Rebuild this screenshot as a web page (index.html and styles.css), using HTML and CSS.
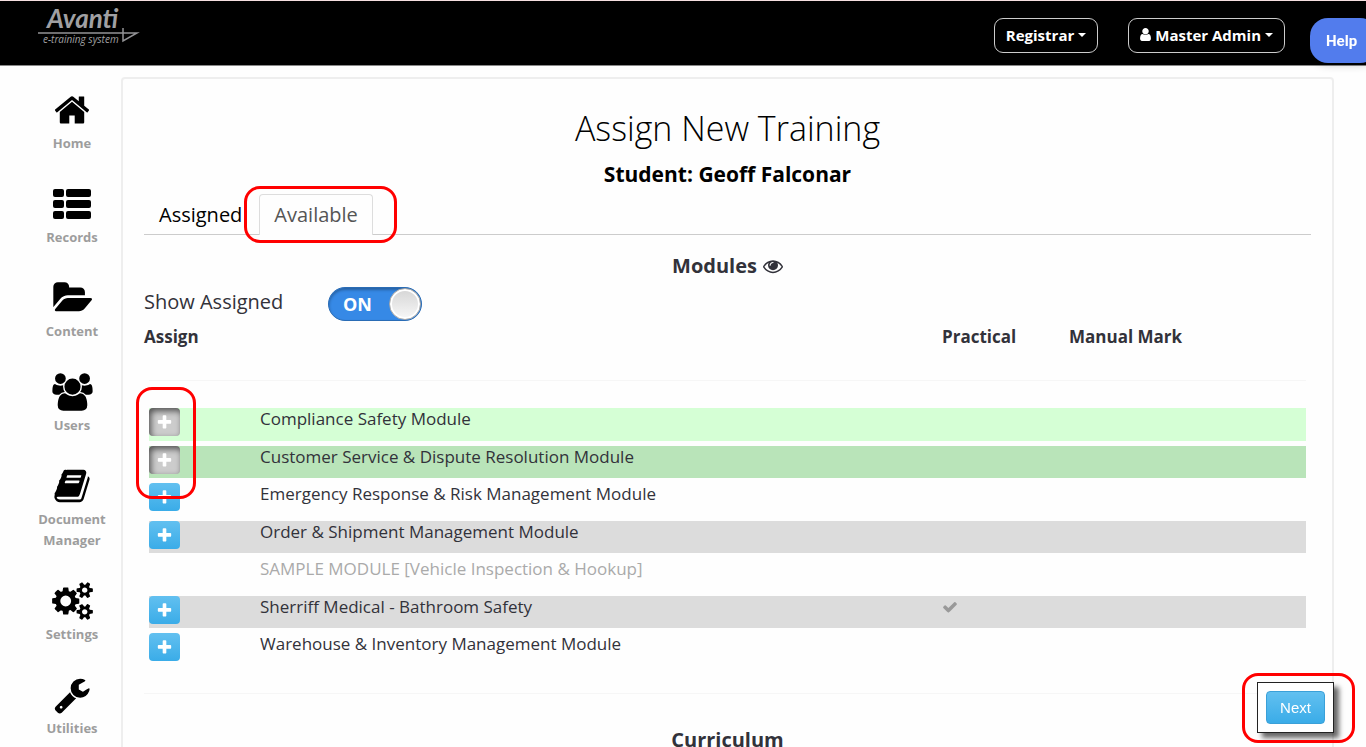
FILE: index.html
```html
<!DOCTYPE html>
<html lang="en">
  <head>
    <meta charset="UTF-8" />
    <meta name="viewport" content="width=device-width, initial-scale=1.0" />
    <title>Assign New Training</title>
    <link rel="stylesheet" href="styles.css">
  </head>
  <body>
    <!-- Shared icons -->
    <svg class="sprite" aria-hidden="true">
      <symbol id="plus" viewBox="0 0 1792 1792">
        <path d="M1600 736v192q0 40-28 68t-68 28h-416v416q0 40-28 68t-68 28h-192q-40 0-68-28t-28-68v-416h-416q-40 0-68-28t-28-68v-192q0-40 28-68t68-28h416v-416q0-40 28-68t68-28h192q40 0 68 28t28 68v416h416q40 0 68 28t28 68z" />
      </symbol>
    </svg>

    <header class="topbar">
      <a class="logo" href="#" aria-label="Avanti e-training system">
        <svg width="102" height="46" viewBox="0 -6 102 46">
          <text class="logo-name" x="9" y="21">Avanti</text>
          <path d="M0 26H99L85 34V21" />
          <text class="logo-sub" x="5" y="36">e-training system</text>
        </svg>
      </a>
      <nav class="account">
        <button class="outline-btn" type="button">Registrar <span class="caret"></span></button>
        <button class="outline-btn" type="button">
          <svg class="user-icon" viewBox="256 128 1280 1536"><path d="M1536 1399q0 109-62.5 187t-150.5 78h-854q-88 0-150.5-78t-62.5-187q0-85 8.5-160.5t31.5-152 58.5-131 94-89 134.5-34.5q131 128 313 128t313-128q76 0 134.5 34.5t94 89 58.5 131 31.5 152 8.5 160.5zm-256-887q0 159-112.5 271.5t-271.5 112.5-271.5-112.5-112.5-271.5 112.5-271.5 271.5-112.5 271.5 112.5 112.5 271.5z" /></svg>
          Master Admin <span class="caret"></span>
        </button>
      </nav>
      <button class="help" type="button">Help</button>
    </header>

    <div class="layout">
      <!-- Sidebar -->
      <nav class="sidebar">
        <a href="#">
          <svg width="38" height="38" viewBox="0 0 1792 1792"><path d="M1472 992v480q0 26-19 45t-45 19h-384v-384h-256v384h-384q-26 0-45-19t-19-45v-480q0-1 .5-3t.5-3l575-474 575 474q1 2 1 6zm223-69l-62 74q-8 9-21 11h-3q-13 0-21-7l-692-577-692 577q-12 8-24 7-13-2-21-11l-62-74q-8-10-7-23.5t11-21.5l719-599q32-26 76-26t76 26l244 204v-195q0-14 9-23t23-9h192q14 0 23 9t9 23v408l219 182q10 8 11 21.5t-7 23.5z" /></svg>
          <span>Home</span>
        </a>
        <a href="#">
          <svg width="38" height="38" viewBox="0 -4 38 38">
            <rect x="0" y="0" width="11" height="8" rx="2" /><rect x="13" y="0" width="25" height="8" rx="2" />
            <rect x="0" y="11" width="11" height="8" rx="2" /><rect x="13" y="11" width="25" height="8" rx="2" />
            <rect x="0" y="22" width="11" height="8" rx="2" /><rect x="13" y="22" width="25" height="8" rx="2" />
          </svg>
          <span>Records</span>
        </a>
        <a href="#">
          <svg width="40" height="38" viewBox="0 0 1944 1792"><path d="M1943 952q0 31-31 66l-336 396q-43 51-120.5 86.5t-143.5 35.5h-1088q-34 0-60.5-13t-26.5-43q0-31 31-66l336-396q43-51 120.5-86.5t143.5-35.5h1088q34 0 60.5 13t26.5 43zm-343-344v160h-832q-94 0-197 47.5t-164 119.5l-337 396-5 6q0-4-.5-12.5t-.5-12.5v-960q0-92 66-158t158-66h320q92 0 158 66t66 158v32h544q92 0 158 66t66 158z" /></svg>
          <span>Content</span>
        </a>
        <a href="#">
          <svg width="43" height="38" viewBox="0 0 2048 1792"><path d="M657 896q-162 5-265 128h-134q-82 0-138-40.5t-56-118.5q0-353 124-353 6 0 43.5 21t97.5 42.5 119 21.5q67 0 133-23-5 37-5 66 0 139 81 256zm1071 637q0 120-73 189.5t-194 69.5h-874q-121 0-194-69.5t-73-189.5q0-53 3.5-103.5t14-109 26.5-108.5 43-97.5 62-81 85.5-53.5 111.5-20q10 0 43 21.5t73 48 107 48 135 21.5 135-21.5 107-48 73-48 43-21.5q61 0 111.5 20t85.5 53.5 62 81 43 97.5 26.5 108.5 14 109 3.5 103.5zm-1024-1277q0 106-75 181t-181 75-181-75-75-181 75-181 181-75 181 75 75 181zm704 384q0 159-112.5 271.5t-271.5 112.5-271.5-112.5-112.5-271.5 112.5-271.5 271.5-112.5 271.5 112.5 112.5 271.5zm576 225q0 78-56 118.5t-138 40.5h-134q-103-123-265-128 81-117 81-256 0-29-5-66 66 23 133 23 59 0 119-21.5t97.5-42.5 43.5-21q124 0 124 353zm-128-609q0 106-75 181t-181 75-181-75-75-181 75-181 181-75 181 75 75 181z" /></svg>
          <span>Users</span>
        </a>
        <a href="#">
          <svg width="38" height="38" viewBox="0 0 1792 1792"><path d="M1703 478q40 57 18 129l-275 906q-19 64-76.5 107.5t-122.5 43.5h-923q-77 0-148.5-53.5t-99.5-131.5q-24-67-2-127 0-4 3-27t4-37q1-8-3-21.5t-3-19.5q2-11 8-21t16.5-23.5 16.5-23.5q23-38 45-91.5t30-91.5q3-10 .5-30t-.5-28q3-11 17-28t17-23q21-36 42-92t25-90q1-9-2.5-32t.5-28q4-13 22-30.5t22-22.5q19-26 42.5-84.5t27.5-96.5q1-8-3-25.5t-2-26.5q2-8 9-18t18-23 17-21q8-12 16.5-30.5t15-35 16-36 19.5-32 26.5-23.5 36-11.5 47.5 5.5l-1 3q38-9 51-9h761q74 0 114 56t18 130l-274 906q-36 119-71.5 153.5t-128.5 34.5h-869q-27 0-38 15-11 16-1 43 24 70 144 70h923q29 0 56-15.5t35-41.5l300-987q7-22 5-57 38 15 59 43zm-1064 2q-4 13 2 22.5t20 9.5h608q13 0 25.5-9.5t16.5-22.5l21-64q4-13-2-22.5t-20-9.5h-608q-13 0-25.5 9.5t-16.5 22.5zm-83 256q-4 13 2 22.5t20 9.5h608q13 0 25.5-9.5t16.5-22.5l21-64q4-13-2-22.5t-20-9.5h-608q-13 0-25.5 9.5t-16.5 22.5z" /></svg>
          <span>Document Manager</span>
        </a>
        <a href="#">
          <svg width="41" height="38" viewBox="0 0 1920 1792"><path d="M896 896q0-106-75-181t-181-75-181 75-75 181 75 181 181 75 181-75 75-181zm768 512q0-52-38-90t-90-38-90 38-38 90q0 53 37.5 90.5t90.5 37.5 90.5-37.5 37.5-90.5zm0-1024q0-52-38-90t-90-38-90 38-38 90q0 53 37.5 90.5t90.5 37.5 90.5-37.5 37.5-90.5zm-384 421v185q0 10-7 19.5t-16 10.5l-155 24q-11 35-32 76 34 48 90 115 7 11 7 20 0 12-7 19-23 30-82.5 89.5t-78.5 59.5q-11 0-21-7l-115-90q-37 19-77 31-11 108-23 155-7 24-30 24h-186q-11 0-20-7.5t-10-17.5l-23-153q-34-10-75-31l-118 89q-7 7-20 7-11 0-21-8-144-133-144-160 0-9 7-19 10-14 41-53t47-61q-23-44-35-82l-152-24q-10-1-17-9.5t-7-19.5v-185q0-10 7-19.5t16-10.5l155-24q11-35 32-76-34-48-90-115-7-11-7-20 0-12 7-20 22-30 82-89t79-59q11 0 21 7l115 90q34-18 77-32 11-108 23-154 7-24 30-24h186q11 0 20 7.5t10 17.5l23 153q34 10 75 31l118-89q8-7 20-7 11 0 21 8 144 133 144 160 0 8-7 19-12 16-42 54t-45 60q23 48 34 82l152 23q10 2 17 10.5t7 19.5zm640 533v140q0 16-149 31-12 27-30 52 51 113 51 138 0 4-4 7-122 71-124 71-8 0-46-47t-52-68q-20 2-30 2t-30-2q-14 21-52 68t-46 47q-2 0-124-71-4-3-4-7 0-25 51-138-18-25-30-52-149-15-149-31v-140q0-16 149-31 13-29 30-52-51-113-51-138 0-4 4-7 4-2 35-20t59-34 30-16q8 0 46 46.5t52 67.5q20-2 30-2t30 2q51-71 92-112l6-2q4 0 124 70 4 3 4 7 0 25-51 138 17 23 30 52 149 15 149 31zm0-1024v140q0 16-149 31-12 27-30 52 51 113 51 138 0 4-4 7-122 71-124 71-8 0-46-47t-52-68q-20 2-30 2t-30-2q-14 21-52 68t-46 47q-2 0-124-71-4-3-4-7 0-25 51-138-18-25-30-52-149-15-149-31v-140q0-16 149-31 13-29 30-52-51-113-51-138 0-4 4-7 4-2 35-20t59-34 30-16q8 0 46 46.5t52 67.5q20-2 30-2t30 2q51-71 92-112l6-2q4 0 124 70 4 3 4 7 0 25-51 138 17 23 30 52 149 15 149 31z" /></svg>
          <span>Settings</span>
        </a>
        <a href="#">
          <svg width="38" height="38" viewBox="0 0 1792 1792"><path d="M448 1472q0-26-19-45t-45-19-45 19-19 45 19 45 45 19 45-19 19-45zm644-420l-682 682q-37 37-90 37-52 0-91-37l-106-108q-38-36-38-90 0-53 38-91l681-681q39 98 114.5 173.5t173.5 114.5zm634-435q0 39-23 106-47 134-164.5 217.5t-258.5 83.5q-185 0-316.5-131.5t-131.5-316.5 131.5-316.5 316.5-131.5q58 0 121.5 16.5t107.5 46.5q16 11 16 28t-16 28l-293 169v224l193 107q5-3 79-48.5t135.5-81 70.5-35.5q15 0 23.5 10t8.5 25z" /></svg>
          <span>Utilities</span>
        </a>
      </nav>

      <!-- Assign panel -->
      <main class="panel">
        <h1>Assign New Training</h1>
        <p class="student">Student: Geoff Falconar</p>

        <div class="tabs">
          <a class="tab" href="#">Assigned</a>
          <a class="tab active" href="#">Available<span class="mark mark-tab"></span></a>
        </div>

        <h2>
          Modules
          <svg width="20" height="20" viewBox="0 0 1792 1792"><path d="M1664 960q-152-236-381-353 61 104 61 225 0 185-131.5 316.5t-316.5 131.5-316.5-131.5-131.5-316.5q0-121 61-225-229 117-381 353 133 205 333.5 326.5t434.5 121.5 434.5-121.5 333.5-326.5zm-720-384q0-20-14-34t-34-14q-125 0-214.5 89.5t-89.5 214.5q0 20 14 34t34 14 34-14 14-34q0-86 61-147t147-61q20 0 34-14t14-34zm848 384q0 34-20 69-140 230-376.5 368.5t-499.5 138.5-499.5-139-376.5-368q-20-35-20-69t20-69q140-229 376.5-368t499.5-139 499.5 139 376.5 368q20 35 20 69z" /></svg>
        </h2>

        <label class="show-assigned">
          <span class="show-label">Show Assigned</span>
          <span class="switch">
            <input type="checkbox" checked />
            <span class="switch-text">ON</span>
            <span class="knob"></span>
          </span>
        </label>

        <div class="table-wrap">
          <table class="modules">
            <thead>
              <tr>
                <th class="col-assign">Assign</th>
                <th></th>
                <th class="col-practical">Practical</th>
                <th class="col-manual">Manual Mark</th>
              </tr>
            </thead>
            <tbody>
              <tr class="assigned">
                <td><button class="add pressed" type="button" aria-label="Assign"><svg><use href="#plus" /></svg></button></td>
                <td>Compliance Safety Module</td>
                <td></td>
                <td></td>
              </tr>
              <tr class="assigned">
                <td><button class="add pressed" type="button" aria-label="Assign"><svg><use href="#plus" /></svg></button></td>
                <td>Customer Service &amp; Dispute Resolution Module</td>
                <td></td>
                <td></td>
              </tr>
              <tr>
                <td><button class="add" type="button" aria-label="Assign"><svg><use href="#plus" /></svg></button></td>
                <td>Emergency Response &amp; Risk Management Module</td>
                <td></td>
                <td></td>
              </tr>
              <tr>
                <td><button class="add" type="button" aria-label="Assign"><svg><use href="#plus" /></svg></button></td>
                <td>Order &amp; Shipment Management Module</td>
                <td></td>
                <td></td>
              </tr>
              <tr class="sample">
                <td></td>
                <td>SAMPLE MODULE [Vehicle Inspection &amp; Hookup]</td>
                <td></td>
                <td></td>
              </tr>
              <tr>
                <td><button class="add" type="button" aria-label="Assign"><svg><use href="#plus" /></svg></button></td>
                <td>Sherriff Medical - Bathroom Safety</td>
                <td><svg class="check" viewBox="0 0 1792 1792"><path d="M1671 566q0 40-28 68l-724 724-136 136q-28 28-68 28t-68-28l-136-136-362-362q-28-28-28-68t28-68l136-136q28-28 68-28t68 28l294 295 656-657q28-28 68-28t68 28l136 136q28 28 28 68z" /></svg></td>
                <td></td>
              </tr>
              <tr>
                <td><button class="add" type="button" aria-label="Assign"><svg><use href="#plus" /></svg></button></td>
                <td>Warehouse &amp; Inventory Management Module</td>
                <td></td>
                <td></td>
              </tr>
            </tbody>
          </table>
          <span class="mark mark-add"></span>
        </div>

        <h2 class="curriculum">Curriculum</h2>
      </main>
    </div>

    <div class="next-box">
      <button class="next" type="button">Next</button>
      <span class="mark mark-next"></span>
    </div>
  </body>
</html>
```

FILE: styles.css
```css
* {
  margin: 0;
  padding: 0;
  box-sizing: border-box;
}

body {
  height: 100vh;
  overflow: hidden;
  background: #fefefe;
  color: #32323a;
  font-family: 'Open Sans', sans-serif;
  font-size: 17px;
}

a {
  color: inherit;
  text-decoration: none;
}

button {
  border: none;
  cursor: pointer;
}

.sprite {
  display: none;
}

/* Top bar */
.topbar {
  display: flex;
  justify-content: space-between;
  align-items: flex-start;
  height: 66px;
  padding: 0 81px 0 38px;
  background: #000;
  border-top: 1px solid #f5dfe0;
  border-bottom: 1px solid #888;
}

.logo svg {
  display: block;
}

.logo path {
  fill: none;
  stroke: #929295;
  stroke-width: 1.5;
}

.logo text {
  fill: #a0a0a3;
  font-style: italic;
}

.logo-name {
  font-family: Lato, sans-serif;
  font-size: 26px;
  font-weight: 700;
}

.logo-sub {
  font-family: 'Open Sans', sans-serif;
  font-size: 10px;
}

.account {
  display: flex;
  gap: 30px;
  padding-top: 17px;
}

.outline-btn {
  display: flex;
  align-items: center;
  gap: 4px;
  height: 35px;
  padding: 0 11px 2px;
  background: #000;
  border: 1px solid #ccc;
  border-radius: 9px;
  color: #fff;
  font-family: inherit;
  font-size: 15px;
  font-weight: 700;
}

.user-icon {
  width: 11px;
  height: 13px;
  fill: #fff;
}

.caret {
  border-top: 4px solid #fff;
  border-left: 4px solid transparent;
  border-right: 4px solid transparent;
}

.help {
  position: fixed;
  top: 18px;
  right: -12px;
  width: 68px;
  height: 45px;
  padding-left: 16px;
  background: #527ced;
  border-radius: 18px;
  box-shadow: 0 2px 8px rgba(0, 0, 0, 0.2);
  color: #fff;
  font-family: Roboto, sans-serif;
  font-size: 15px;
  font-weight: 700;
  text-align: left;
}

/* Sidebar */
.layout {
  display: flex;
}

.sidebar {
  flex: none;
  display: flex;
  flex-direction: column;
  gap: 31px;
  width: 121px;
  padding: 25px 0 0 22px;
}

.sidebar a {
  display: flex;
  flex-direction: column;
  align-items: center;
  width: 100px;
  color: #9d9d9d;
  font-size: 13px;
  font-weight: 700;
  line-height: 21px;
  text-align: center;
}

.sidebar svg {
  margin-bottom: 4px;
  fill: #000;
}

.sidebar a > span {
  max-width: 80px;
}

/* Panel */
.panel {
  flex: 1;
  min-width: 0;
  margin: 11px 32px 0 0;
  padding: 24px 21px;
  border: 2px solid #eee;
  border-radius: 4px;
}

h1 {
  color: #000;
  font-size: 34px;
  font-weight: 300;
  line-height: 50px;
  text-align: center;
}

.student {
  margin-top: 6px;
  color: #000;
  font-size: 21px;
  font-weight: 700;
  line-height: 30px;
  text-align: center;
}

.tabs {
  display: flex;
  gap: 2px;
  height: 41px;
  margin-top: 5px;
  border-bottom: 1px solid #ccc;
}

.tab {
  position: relative;
  height: 41px;
  padding: 0 14px;
  border: 1px solid transparent;
  color: #000;
  font-size: 20px;
  line-height: 40px;
}

.tab.active {
  background: #fefefe;
  border-color: #ddd;
  border-bottom: none;
  border-radius: 4px 4px 0 0;
  color: #555;
}

h2 {
  display: flex;
  justify-content: center;
  align-items: center;
  gap: 6px;
  margin-top: 17px;
  font-size: 20px;
  font-weight: 700;
  line-height: 28px;
}

h2 svg {
  fill: #32323a;
}

.show-assigned {
  display: flex;
  align-items: center;
  height: 34px;
  margin-top: 7px;
}

.show-label {
  width: 184px;
  padding-bottom: 4px;
  font-size: 20px;
  line-height: 30px;
}

.switch {
  position: relative;
  display: flex;
  align-items: center;
  width: 94px;
  height: 34px;
  padding-left: 14px;
  background: #3689e6;
  border: 1px solid #2a6cb5;
  border-radius: 17px;
  box-shadow: inset 0 2px 3px rgba(0, 0, 0, 0.3);
  color: #fff;
  font-size: 18px;
  font-weight: 700;
}

.switch input {
  position: absolute;
  inset: 0;
  opacity: 0;
}

.knob {
  width: 32px;
  height: 32px;
  margin-left: auto;
  background: linear-gradient(#d5d5d5, #f8f8f8);
  border: 1px solid #aaa;
  border-radius: 50%;
  box-shadow: inset 0 0 0 2px #fff;
}

/* Modules table */
.table-wrap {
  position: relative;
  padding: 0 5px 22px;
  border-bottom: 1px solid #f6f6f6;
}

.modules {
  width: 100%;
  border-spacing: 0 5px;
  table-layout: fixed;
  line-height: 22px;
}

.modules th {
  height: 55px;
  border-bottom: 1px solid #f6f6f6;
  text-align: left;
  vertical-align: top;
  white-space: nowrap;
}

.modules .col-assign {
  width: 111px;
  text-indent: -5px;
}

.modules .col-practical {
  width: 127px;
}

.modules .col-manual {
  width: 237px;
}

.modules tbody::before {
  content: '';
  display: block;
  height: 17px;
}

.modules td {
  height: 33px;
  vertical-align: top;
}

.modules tr:nth-child(even) td {
  height: 32px;
  background: #dcdcdc;
}

.modules tr.assigned td {
  background: #d5ffd5;
}

.modules tr.assigned:nth-child(even) td {
  background: #b9e4b9;
}

.modules tr.sample td {
  color: #aaa;
}

.add {
  display: flex;
  justify-content: center;
  align-items: center;
  width: 31px;
  height: 28px;
  background: linear-gradient(#62c0f0, #3aace8);
  border-radius: 4px;
}

.add.pressed {
  background: #ccc;
  box-shadow: inset 2px 3px 6px rgba(0, 0, 0, 0.6);
}

.add svg {
  width: 17px;
  height: 17px;
  fill: #fff;
}

.check {
  display: block;
  width: 16px;
  height: 22px;
  fill: #999;
}

.curriculum {
  margin-top: 32px;
}

/* Next button */
.next-box {
  position: fixed;
  right: 32px;
  bottom: 14px;
  padding: 8px;
  background: #fff;
  border: 1px solid #222;
  box-shadow: 5px 5px 5px rgba(0, 0, 0, 0.6);
}

.next {
  display: block;
  width: 59px;
  height: 33px;
  background: linear-gradient(#62c0f0, #3aace8);
  border: 1px solid #3aa0d8;
  border-radius: 4px;
  color: #fff;
  font-family: 'Liberation Sans', sans-serif;
  font-size: 15px;
}

/* Red highlights */
.mark {
  position: absolute;
  border: 3px solid #f00;
  border-radius: 16px;
  pointer-events: none;
}

.mark-tab {
  inset: -9px -25px -8px -16px;
}

.mark-add {
  top: 66px;
  left: -8px;
  width: 60px;
  height: 112px;
}

.mark-next {
  inset: -10px -22px -11px -16px;
}
```
